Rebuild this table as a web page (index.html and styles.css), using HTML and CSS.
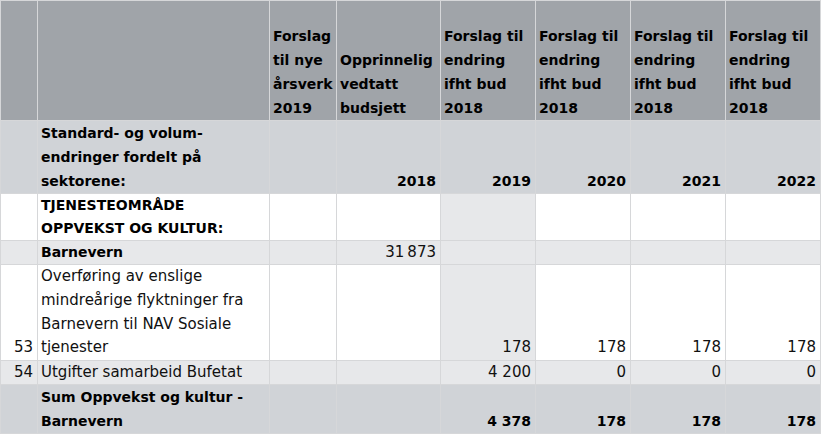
FILE: index.html
```html
<!DOCTYPE html>
<html lang="no">
<head>
<meta charset="utf-8">
<title>Budsjett</title>
<link rel="stylesheet" href="styles.css">
</head>
<body>
<table class="budget">
  <colgroup>
    <col class="c-nr"><col class="c-text"><col class="c-arsverk"><col class="c-budsjett">
    <col class="c-year"><col class="c-year"><col class="c-year"><col class="c-year">
  </colgroup>
  <tr class="r-head">
    <th></th>
    <th></th>
    <th>Forslag<br>til nye<br>årsverk<br>2019</th>
    <th>Opprinnelig<br>vedtatt<br>budsjett</th>
    <th>Forslag til<br>endring<br>ifht bud<br>2018</th>
    <th>Forslag til<br>endring<br>ifht bud<br>2018</th>
    <th>Forslag til<br>endring<br>ifht bud<br>2018</th>
    <th>Forslag til<br>endring<br>ifht bud<br>2018</th>
  </tr>
  <tr class="r-sub bold">
    <td></td>
    <td class="txt">Standard- og volum-<br>endringer fordelt på<br>sektorene:</td>
    <td></td>
    <td class="num">2018</td>
    <td class="num">2019</td>
    <td class="num">2020</td>
    <td class="num">2021</td>
    <td class="num">2022</td>
  </tr>
  <tr class="r-area bold">
    <td></td>
    <td class="txt">TJENESTEOMRÅDE<br>OPPVEKST OG KULTUR:</td>
    <td></td>
    <td></td>
    <td class="shade"></td>
    <td></td>
    <td></td>
    <td></td>
  </tr>
  <tr class="r-light">
    <td></td>
    <td class="txt bold">Barnevern</td>
    <td></td>
    <td class="num">31&#8201;873</td>
    <td></td>
    <td></td>
    <td></td>
    <td></td>
  </tr>
  <tr class="r-item">
    <td class="num">53</td>
    <td class="txt">Overføring av enslige<br>mindreårige flyktninger fra<br>Barnevern til NAV Sosiale<br>tjenester</td>
    <td></td>
    <td></td>
    <td class="num shade">178</td>
    <td class="num">178</td>
    <td class="num">178</td>
    <td class="num">178</td>
  </tr>
  <tr class="r-light">
    <td class="num">54</td>
    <td class="txt">Utgifter samarbeid Bufetat</td>
    <td></td>
    <td></td>
    <td class="num">4 200</td>
    <td class="num">0</td>
    <td class="num">0</td>
    <td class="num">0</td>
  </tr>
  <tr class="r-sum bold">
    <td></td>
    <td class="txt">Sum Oppvekst og kultur -<br>Barnevern</td>
    <td></td>
    <td></td>
    <td class="num">4 378</td>
    <td class="num">178</td>
    <td class="num">178</td>
    <td class="num">178</td>
  </tr>
</table>
</body>
</html>
```
FILE: styles.css
```css
html, body {
  margin: 0;
  padding: 0;
  background: #ffffff;
}

.budget {
  border-collapse: collapse;
  table-layout: fixed;
  width: 821px;
  font-family: "DejaVu Sans", "Liberation Sans", sans-serif;
  font-size: 15px;
  color: #111111;
}

.c-nr { width: 37px; }
.c-text { width: 232px; }
.c-arsverk { width: 67px; }
.c-budsjett { width: 104px; }
.c-year { width: 95px; }

.budget th,
.budget td {
  border: 1px solid #d6d7d9;
  padding: 0 4px 0 3px;
  vertical-align: bottom;
  white-space: nowrap;
  overflow: hidden;
}

.budget th {
  font-size: 14px;
  font-weight: bold;
  text-align: left;
  color: #000000;
  line-height: 24px;
  height: 96px;
  padding-top: 23px;
  background: #a0a4a9;
}

.bold {
  font-weight: bold;
}

.bold td,
td.bold {
  font-size: 14px;
  color: #000000;
}

.num {
  text-align: right;
}

.txt {
  text-align: left;
}

.r-sub td {
  background: #d0d3d7;
  line-height: 24px;
}

.r-area td {
  background: #ffffff;
  line-height: 23px;
}

.r-light td {
  background: #e7e8ea;
  line-height: 23px;
}

.r-item td {
  background: #ffffff;
  line-height: 23.75px;
}

.r-sum td {
  background: #d0d3d7;
  line-height: 24px;
}

.budget td.shade {
  background: #e7e8ea;
}
```
